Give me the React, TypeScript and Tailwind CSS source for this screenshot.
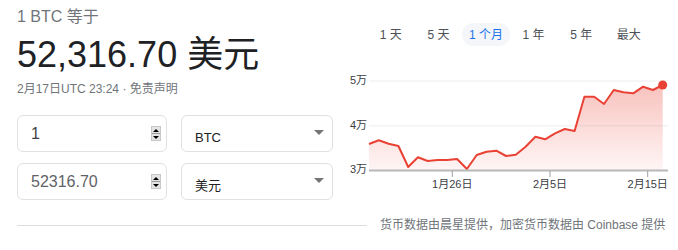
import React from "react";

const FONT = { fontFamily: '"Liberation Sans", "Noto Sans CJK SC", sans-serif' };

// 31 daily closes, y in chart px (chart box starts at x=345, y=60)
const PRICES = [
  144, 140.3, 143.7, 146, 167, 157.3, 161, 160, 160, 159, 169, 155, 151.7, 150.7, 156,
  154.7, 146.7, 136.7, 139.3, 133.3, 129, 131, 96.7, 96.7, 104, 90, 92.3, 93.3, 86.7, 90, 85,
];

const RANGES = ["1 天", "5 天", "1 个月", "1 年", "5 年", "最大"];

function Spinner() {
  return (
    <div className="flex h-[15px] w-[10px] shrink-0 flex-col border border-[#c8c8c8] bg-[#e4e4e4]">
      <div className="flex flex-1 items-center justify-center border-b border-[#9a9a9a]">
        <div className="h-0 w-0 border-x-[3px] border-b-[3px] border-x-transparent border-b-black" />
      </div>
      <div className="flex flex-1 items-center justify-center">
        <div className="h-0 w-0 border-x-[3px] border-t-[3px] border-x-transparent border-t-black" />
      </div>
    </div>
  );
}

function NumberBox({ value, dark }: { value: string; dark?: boolean }) {
  return (
    <div className="flex h-[37px] w-[150px] shrink-0 items-center rounded-[6px] border border-[#dfe1e5] pl-[13px] pr-[5px]">
      <span className={`flex-1 text-[16px] ${dark ? "text-[#3c4043]" : "text-[#5f6368]"}`}>{value}</span>
      <Spinner />
    </div>
  );
}

function SelectBox({ label }: { label: string }) {
  return (
    <div className="ml-[14px] flex h-[37px] w-[152px] shrink-0 rounded-[6px] border border-[#dfe1e5] pl-[13px] pr-[8px]">
      <span className="flex-1 self-center pt-[8px] text-[13px] text-[#202124]">{label}</span>
      <div className="mt-[14px] h-0 w-0 border-x-[5px] border-t-[5px] border-x-transparent border-t-[#757575]" />
    </div>
  );
}

function Chart() {
  const pts = PRICES.map((y, i) => [24 + i * 9.79, y - 60]);
  const line = pts.map((p, i) => `${i ? "L" : "M"}${p[0].toFixed(1)} ${p[1].toFixed(1)}`).join(" ");
  const last = pts[pts.length - 1];
  const area = `${line} L${last[0].toFixed(1)} 110 L24 110 Z`;
  const ticks = [
    { x: 107.3, label: "1月26日" },
    { x: 205, label: "2月5日" },
    { x: 302.7, label: "2月15日" },
  ];
  return (
    <svg width="333" height="140" className="mt-[14px] block">
      <defs>
        <linearGradient id="fill" x1="0" y1="25" x2="0" y2="110" gradientUnits="userSpaceOnUse">
          <stop offset="0" stopColor="#e94235" stopOpacity="0.32" />
          <stop offset="1" stopColor="#e94235" stopOpacity="0.05" />
        </linearGradient>
      </defs>
      <line x1="24" x2="323" y1="21" y2="21" stroke="#f3f3f3" strokeWidth="1.5" />
      <line x1="24" x2="323" y1="65.7" y2="65.7" stroke="#f3f3f3" strokeWidth="1.5" />
      <g fontSize="11" fill="#3c4043" textAnchor="end" dominantBaseline="middle">
        <text x="22" y="21">5万</text>
        <text x="22" y="65.7">4万</text>
        <text x="22" y="110">3万</text>
      </g>
      <path d={area} fill="url(#fill)" />
      <path d={line} fill="none" stroke="#e94235" strokeWidth="2" strokeLinejoin="round" />
      <circle cx={last[0]} cy={last[1]} r="4.5" fill="#e94235" />
      <line x1="24" x2="323" y1="110.5" y2="110.5" stroke="#b8b8b8" strokeWidth="2" />
      {ticks.map((t) => (
        <g key={t.label}>
          <line x1={t.x} x2={t.x} y1="111" y2="117" stroke="#9e9e9e" strokeWidth="1" />
          <text x={t.x} y="125" fontSize="11" fill="#3c4043" textAnchor="middle" dominantBaseline="middle">
            {t.label}
          </text>
        </g>
      ))}
    </svg>
  );
}

export default function App() {
  return (
    <main className="h-[250px] w-[678px] overflow-hidden bg-white" style={FONT}>
      <div className="flex h-[214px]">
        <div className="w-[345px] shrink-0 pl-[17px]">
          <p className="mt-[7px] text-[16px] leading-[20px] text-[#70757a]">1 BTC 等于</p>
          <p className="mt-[6px] text-[36px] leading-[44px] text-[#202124]">52,316.70 美元</p>
          <p className="mt-[4px] text-[12px] leading-[16px] text-[#70757a]">2月17日UTC 23:24 · 免责声明</p>
          <div className="mt-[18px] flex">
            <NumberBox value="1" dark />
            <SelectBox label="BTC" />
          </div>
          <div className="mt-[11px] flex">
            <NumberBox value="52316.70" />
            <SelectBox label="美元" />
          </div>
        </div>
        <div className="flex-1">
          <div className="mt-[23px] flex h-[23px] pl-[22px]">
            {RANGES.map((r) => (
              <div key={r} className="flex w-[47.6px] shrink-0 justify-center">
                <span
                  className={`flex items-center whitespace-nowrap rounded-full px-[7px] text-[12px] ${
                    r === "1 个月" ? "bg-[#f4f6f9] text-[#1a73e8]" : "text-[#4d5156]"
                  }`}
                >
                  {r}
                </span>
              </div>
            ))}
          </div>
          <Chart />
        </div>
      </div>
      <div className="flex h-[22px] items-center pl-[17px]">
        <div className="h-px w-[350px] shrink-0 bg-[#dadce0]" />
        <span className="ml-[13px] whitespace-nowrap text-[12px] text-[#70757a]">
          货币数据由晨星提供，加密货币数据由 Coinbase 提供
        </span>
      </div>
    </main>
  );
}
